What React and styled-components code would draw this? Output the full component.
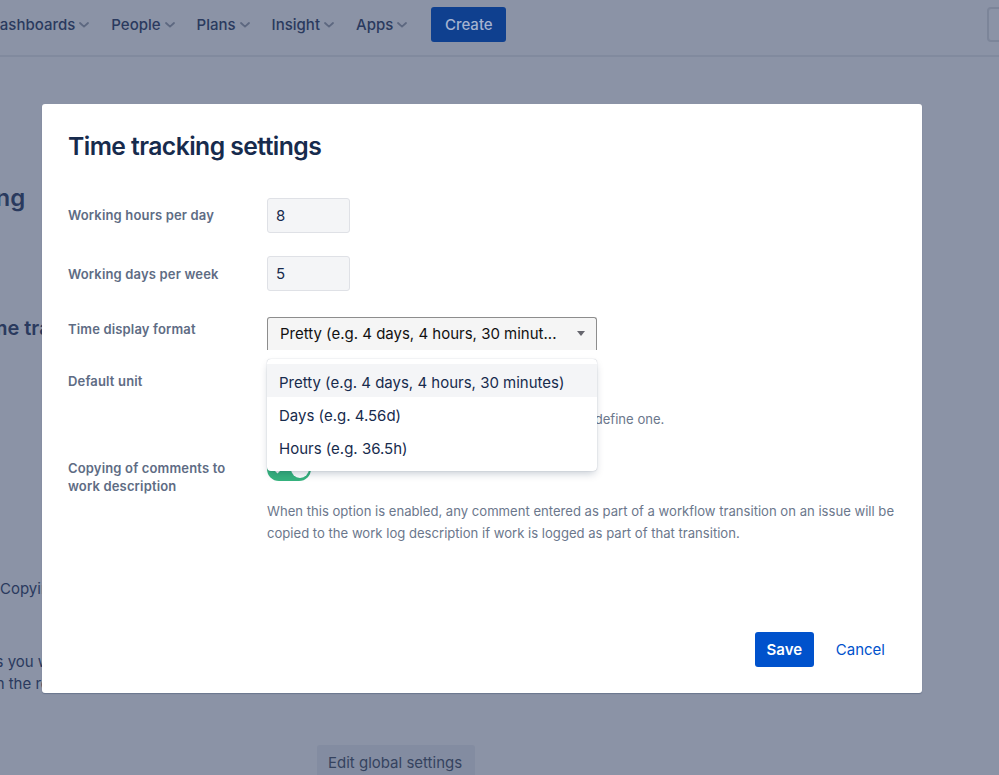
import React from 'react';
import styled, { createGlobalStyle } from 'styled-components';

const GlobalStyle = createGlobalStyle`
  html, body {
    margin: 0;
    padding: 0;
    height: 100%;
    background: #8b93a6;
    font-family: Inter, "Liberation Sans", sans-serif;
    overflow: hidden;
  }
`;

const Page = styled.div`
  position: relative;
  width: 999px;
  height: 775px;
  overflow: hidden;
  background: #8b93a6;
`;

const TopBar = styled.header`
  display: flex;
  align-items: center;
  height: 49px;
  margin-left: -11px;
  padding-bottom: 6px;
  border-bottom: 2px solid #818a9e;
  box-sizing: content-box;
`;

const NavItem = styled.span`
  display: flex;
  align-items: center;
  gap: 4px;
  margin-right: 22px;
  font-size: 15px;
  font-weight: 500;
  color: #2a3a5e;
  white-space: nowrap;
`;

const CreateButton = styled.span`
  display: flex;
  align-items: center;
  justify-content: center;
  width: 75px;
  height: 35px;
  margin-left: 2px;
  border-radius: 3px;
  background: #0f408f;
  color: #a5b3cf;
  font-size: 15px;
  font-weight: 500;
`;

const SearchStub = styled.span`
  width: 40px;
  height: 31px;
  margin-left: auto;
  margin-right: -32px;
  border: 2px solid #7c8599;
  border-radius: 4px;
`;

const Backdrop = styled.main`
  display: flex;
  flex-direction: column;
  color: #2a3a5e;
`;

const BackHeading = styled.div`
  margin: ${(p) => p.$top}px 0 0 ${(p) => p.$left}px;
  font-size: ${(p) => p.$size}px;
  line-height: 30px;
  font-weight: 600;
  white-space: nowrap;
`;

const BackText = styled.div`
  margin: ${(p) => p.$top}px 0 0 ${(p) => p.$left}px;
  font-size: 15px;
  line-height: 22px;
  white-space: nowrap;
`;

const BackButton = styled.span`
  align-self: flex-start;
  margin: 50px 0 0 317px;
  padding: 0 11px;
  width: 136px;
  height: 36px;
  line-height: 36px;
  border-radius: 3px;
  background: #838ca1;
  color: #35435f;
  font-size: 15px;
  white-space: nowrap;
`;

const Modal = styled.section`
  position: absolute;
  left: 42px;
  top: 104px;
  width: 880px;
  height: 589px;
  box-sizing: border-box;
  display: flex;
  flex-direction: column;
  padding: 0 26px;
  border-radius: 3px;
  background: #fff;
  box-shadow: 0 1px 1px rgba(9, 30, 66, 0.25);
`;

const Title = styled.h1`
  margin: 26px 0 0;
  font-size: 24.7px;
  line-height: 32px;
  font-weight: 600;
  letter-spacing: -0.55px;
  color: #172b4d;
`;

const Form = styled.div`
  display: flex;
  flex-direction: column;
  margin-top: 36px;
`;

const Row = styled.div`
  display: grid;
  grid-template-columns: 199px 1fr;
  align-items: ${(p) => (p.$center ? 'center' : 'start')};
  margin-bottom: ${(p) => p.$gap}px;
`;

const Label = styled.label`
  padding-top: ${(p) => p.$offset || 0}px;
  padding-bottom: ${(p) => p.$lift || 0}px;
  font-size: 13px;
  line-height: 18px;
  font-weight: 600;
  letter-spacing: 0.16px;
  color: #5e6c84;
`;

const NumberInput = styled.div`
  width: 83px;
  height: 35px;
  box-sizing: border-box;
  padding-left: 8px;
  border: 1px solid #dfe1e6;
  border-radius: 3px;
  background: #f4f5f7;
  color: #172b4d;
  font-size: 15px;
  line-height: 33px;
`;

const SelectWrap = styled.div`
  position: relative;
  width: 330px;
`;

const SelectBox = styled.div`
  display: flex;
  align-items: center;
  justify-content: space-between;
  height: 33px;
  box-sizing: border-box;
  padding: 0 11px 2px 12px;
  border: 1px solid #8d8d8d;
  border-bottom: 0;
  border-radius: 3px 3px 0 0;
  background: #f5f5f5;
  color: #111;
  font-size: 15px;
`;

const Caret = styled.i`
  width: 0;
  height: 0;
  border-left: 4.5px solid transparent;
  border-right: 4.5px solid transparent;
  border-top: 5px solid #66666e;
`;

const Menu = styled.ul`
  position: absolute;
  z-index: 2;
  left: 0;
  top: 42px;
  width: 330px;
  box-sizing: border-box;
  margin: 0;
  padding: 5px 0 8px;
  list-style: none;
  border-radius: 4px;
  background: #fff;
  box-shadow: 0 0 1px rgba(9, 30, 66, 0.35), 0 4px 8px -2px rgba(9, 30, 66, 0.25);
`;

const MenuItem = styled.li`
  padding-left: 12px;
  height: 33px;
  line-height: 38px;
  font-size: 15px;
  color: #172b4d;
  white-space: nowrap;
  background: ${(p) => (p.$active ? '#f4f5f7' : 'transparent')};
`;

const Help = styled.p`
  margin: ${(p) => p.$top}px 0 0;
  font-size: 13.1px;
  line-height: 22px;
  color: #6b778c;
  white-space: ${(p) => (p.$nowrap ? 'nowrap' : 'normal')};
`;

const Toggle = styled.span`
  display: flex;
  align-items: center;
  justify-content: space-between;
  width: 44px;
  height: 24px;
  margin-top: -2px;
  box-sizing: border-box;
  padding: 0 2px 0 6px;
  border-radius: 12px;
  background: #36b37e;
  color: #fff;
`;

const Knob = styled.i`
  width: 18px;
  height: 18px;
  border-radius: 50%;
  background: #fff;
`;

const Footer = styled.footer`
  display: flex;
  align-items: center;
  margin-top: auto;
  margin-bottom: 26px;
  justify-content: flex-end;
  gap: 22px;
  padding-right: 11px;
`;

const SaveButton = styled.button`
  width: 59px;
  height: 35px;
  padding: 0;
  border: 0;
  border-radius: 3px;
  background: #0052cc;
  color: #fff;
  font: 600 15px Inter, "Liberation Sans", sans-serif;
`;

const CancelLink = styled.a`
  color: #0052cc;
  font-size: 15px;
`;

const Chevron = () => (
  <svg width="10" height="6" viewBox="0 0 10 6" fill="none">
    <path d="M1 1l4 3.6L9 1" stroke="#5d6880" strokeWidth="1.8" strokeLinecap="round" strokeLinejoin="round" />
  </svg>
);

const navItems = ['Dashboards', 'People', 'Plans', 'Insight', 'Apps'];

const App = () => (
  <Page>
    <GlobalStyle />
    <TopBar>
      {navItems.map((item) => (
        <NavItem key={item}>
          {item}
          <Chevron />
        </NavItem>
      ))}
      <CreateButton>Create</CreateButton>
      <SearchStub />
    </TopBar>
    <Backdrop>
      <BackHeading $top={126} $left={-134} $size={24}>Time tracking</BackHeading>
      <BackHeading $top={100} $left={-29} $size={20}>Time tracking</BackHeading>
      <BackText $top={235} $left={0}>Copying of comments</BackText>
      <BackText $top={51} $left={-54}>Settings you want</BackText>
      <BackText $top={0} $left={-8}>in the rest</BackText>
      <BackButton>Edit global settings</BackButton>
    </Backdrop>
    <Modal>
      <Title>Time tracking settings</Title>
      <Form>
        <Row $center $gap={23}>
          <Label $lift={2}>Working hours per day</Label>
          <NumberInput>8</NumberInput>
        </Row>
        <Row $center $gap={26}>
          <Label>Working days per week</Label>
          <NumberInput>5</NumberInput>
        </Row>
        <Row $gap={22}>
          <Label $offset={3}>Time display format</Label>
          <SelectWrap>
            <SelectBox>
              Pretty (e.g. 4 days, 4 hours, 30 minut...
              <Caret />
            </SelectBox>
            <Menu>
              <MenuItem $active>Pretty (e.g. 4 days, 4 hours, 30 minutes)</MenuItem>
              <MenuItem>Days (e.g. 4.56d)</MenuItem>
              <MenuItem>Hours (e.g. 36.5h)</MenuItem>
            </Menu>
          </SelectWrap>
        </Row>
        <Row $gap={29}>
          <Label>Default unit</Label>
          <Help $nowrap $top={36}>This default unit is applied to hours when you do not define one.</Help>
        </Row>
        <Row $gap={0}>
          <Label>Copying of comments to<br />work description</Label>
          <div>
            <Toggle>
              <svg width="12" height="10" viewBox="0 0 12 10" fill="none">
                <path d="M1.5 5l3 3 6-6" stroke="#fff" strokeWidth="2" />
              </svg>
              <Knob />
            </Toggle>
            <Help $top={19}>
              When this option is enabled, any comment entered as part of a workflow transition on an issue will be copied to the work log description if work is logged as part of that transition.
            </Help>
          </div>
        </Row>
      </Form>
      <Footer>
        <SaveButton>Save</SaveButton>
        <CancelLink>Cancel</CancelLink>
      </Footer>
    </Modal>
  </Page>
);

export default App;
